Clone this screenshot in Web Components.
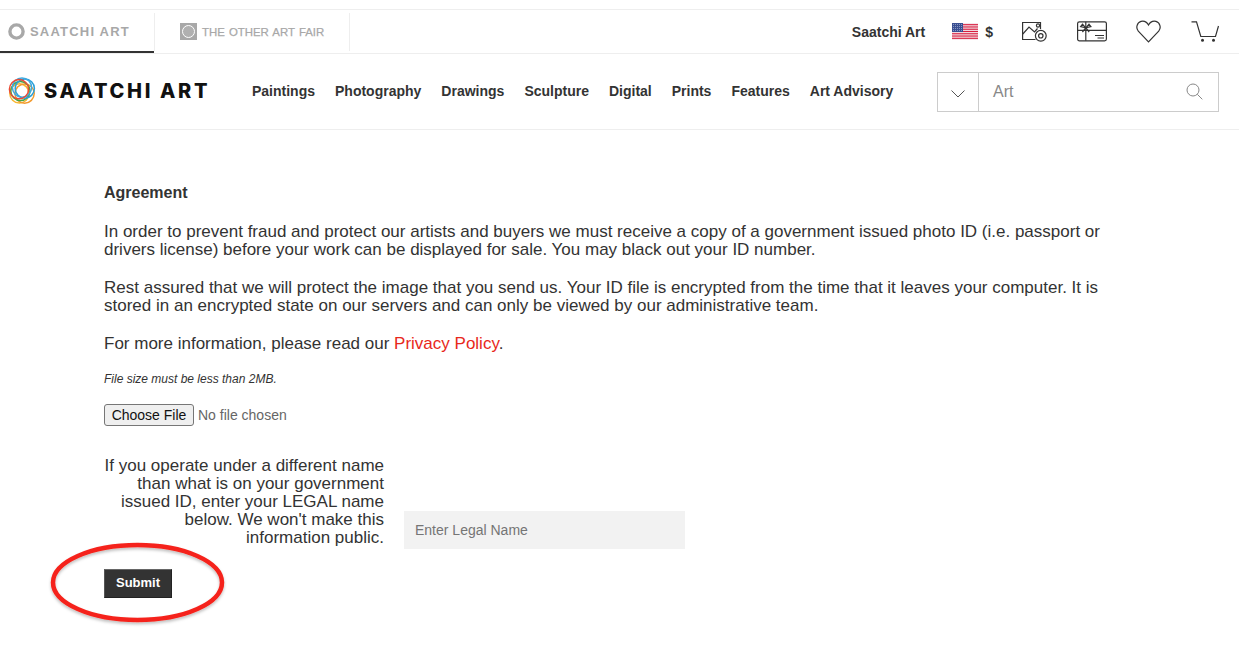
<!DOCTYPE html>
<html lang="en">
<head>
<meta charset="utf-8">
<title>Saatchi Art</title>
<style>
  html, body { margin: 0; background: #fff; }
  body { font-family: "Liberation Sans", Arial, sans-serif; color: #333; }
</style>
</head>
<body>
<site-topbar></site-topbar>
<site-mainbar></site-mainbar>
<agreement-form>
  <span slot="title">Agreement</span>
  <p>In order to prevent fraud and protect our artists and buyers we must receive a copy of a government issued photo ID (i.e. passport or drivers license) before your work can be displayed for sale. You may black out your ID number.</p>
  <p>Rest assured that we will protect the image that you send us. Your ID file is encrypted from the time that it leaves your computer. It is stored in an encrypted state on our servers and can only be viewed by our administrative team.</p>
  <p>For more information, please read our <a href="#" style="color:#e8281b;text-decoration:none">Privacy Policy</a>.</p>
</agreement-form>

<script>
// Top strip: site tabs on the left, account icons on the right
class SiteTopbar extends HTMLElement {
  constructor() {
    super();
    this.attachShadow({ mode: 'open' });
    const stripes = [1, 3, 5, 7, 9, 11, 13].map(i =>
      `<rect x="0" y="${(i * 17 / 15).toFixed(2)}" width="26" height="1.13" fill="#d81e3f"/>`).join('');
    this.shadowRoot.innerHTML = `
      <style>
        :host { display: block; margin-top: 9px; border-top: 1px solid #eee; border-bottom: 1px solid #eee; font-family: "Liberation Sans", Arial, sans-serif; }
        .bar { display: flex; align-items: stretch; height: 43px; }
        .tab { display: flex; align-items: center; box-sizing: border-box; color: #a8a8a8; font-weight: 700; white-space: nowrap; }
        .tab.one { width: 154px; padding: 2px 0 0 8px; gap: 5px; font-size: 13px; letter-spacing: 1.2px; border-bottom: 2px solid #333; }
        .tab.two { width: 194px; padding: 0 0 0 25px; gap: 5px; font-size: 11.4px; font-weight: 400; -webkit-text-stroke: .25px #a8a8a8; letter-spacing: 0; word-spacing: 1px; }
        .sep { width: 1px; background: #eee; margin: 3px 0 2px; }
        .right { margin-left: auto; display: flex; align-items: center; padding-right: 20px; }
        .name { font-size: 14px; font-weight: 700; color: #333; margin-right: 27px; }
        .cur { font-size: 14px; font-weight: 700; color: #333; margin: 0 29px 0 7px; }
        svg { display: block; flex: none; }
        .ic { fill: none; stroke: #333; stroke-width: 1.2; }
      </style>
      <div class="bar">
        <div class="tab one">
          <svg width="17" height="17" viewBox="0 0 17 17"><circle cx="8.5" cy="8.5" r="6.6" fill="none" stroke="#a8a8a8" stroke-width="3.4"/></svg>
          <span>SAATCHI ART</span>
        </div>
        <div class="sep"></div>
        <div class="tab two">
          <svg width="17" height="17" viewBox="0 0 17 17"><rect width="17" height="17" fill="#a8a8a8"/><circle cx="8.5" cy="8.5" r="6" fill="#b0b0b0" stroke="#fff" stroke-width="1"/></svg>
          <span>THE OTHER ART FAIR</span>
        </div>
        <div class="sep"></div>
        <div class="right">
          <span class="name">Saatchi Art</span>
          <svg width="26" height="17" viewBox="0 0 26 17"><rect width="26" height="17" fill="#f4e6ea"/>${stripes}<rect width="11" height="9" fill="#3a4f92"/><path d="M1 1.5H10M1 3.5H10M1 5.5H10M1 7.5H10" stroke="#aab4d6" stroke-width=".7" stroke-dasharray="1 1"/></svg>
          <span class="cur">$</span>
          <svg class="ic" width="25" height="21" viewBox="0 0 25 21" style="margin-right:30px">
            <path d="M18.5 8V1.5H.6V18.5H13.5"/><path d="M.8 13 7 6l5.5 5 3-3.5"/><circle cx="16" cy="4.5" r="1.6"/>
            <circle cx="18.8" cy="14.8" r="5.4"/><circle cx="18.8" cy="14.8" r="2.2"/>
          </svg>
          <svg class="ic" width="30" height="21" viewBox="0 0 30 21" style="margin-right:29px">
            <rect x=".6" y=".8" width="28.8" height="19" rx="1.8"/><path d="M.6 9.3H29.4M8.8 .8V19.8"/>
            <path d="M8.8 6.8 5.5 3.2 3.6 5.6ZM8.8 6.8 12 3.2 13.9 5.6ZM8.8 6.8 5.4 11M8.8 6.8 12.2 11"/><path d="M18 14.5H27M20.5 17H27"/>
          </svg>
          <svg class="ic" width="25" height="23" viewBox="0 0 25 23" style="margin-right:30px">
            <path d="M12.5 21.8 2.3 11.2C-.4 8 .8 2.6 5 1.4 8.2.6 11 2.4 12.5 5 14 2.4 16.8.6 20 1.4c4.2 1.2 5.4 6.6 2.7 9.8Z"/>
          </svg>
          <svg class="ic" width="28" height="21" viewBox="0 0 28 21">
            <path d="M.5 .8H5.5L9.8 15.5H24.5L27.5 5"/>
            <circle cx="11.5" cy="19.3" r="1.5" fill="#333" stroke="none"/><circle cx="22.5" cy="19.3" r="1.5" fill="#333" stroke="none"/>
          </svg>
        </div>
      </div>`;
  }
}

// Main bar: logo, category nav, search box
class SiteMainbar extends HTMLElement {
  constructor() {
    super();
    this.attachShadow({ mode: 'open' });
    const links = ['Paintings', 'Photography', 'Drawings', 'Sculpture', 'Digital', 'Prints', 'Features', 'Art Advisory'];
    // logo mark: coloured rings nudged around the centre, hole stays white
    const rings = [['#f7b733', -2.6, 2.4], ['#f39a2e', 2.6, 2.6], ['#46a546', -1.6, 0], ['#2a9fd8', 2.8, -2.4], ['#3fa9e0', 0, -3.4], ['#ea4b35', -3, -1.8]]
      .map(([c, dx, dy]) => `<circle cx="${14 + dx}" cy="${14 + dy}" r="9.6" stroke="${c}"/>`).join('');
    this.shadowRoot.innerHTML = `
      <style>
        :host { display: block; border-bottom: 1px solid #eee; font-family: "Liberation Sans", Arial, sans-serif; }
        .bar { display: flex; align-items: center; height: 75px; box-sizing: border-box; padding: 0 20px 2px 8px; }
        .logo { display: flex; align-items: center; gap: 8px; width: 244px; flex: none; }
        .logo svg { flex: none; }
        .word { font-family: Inter, sans-serif; font-weight: 800; font-size: 20px; letter-spacing: 2.65px; color: #111; white-space: nowrap; }
        nav { display: flex; gap: 20px; font-size: 14px; font-weight: 700; color: #333; white-space: nowrap; }
        .search { margin-left: auto; display: flex; width: 282px; height: 40px; box-sizing: border-box; border: 1px solid #ccc; position: relative; top: 1px; }
        .drop { width: 41px; display: flex; align-items: center; justify-content: center; border-right: 1px solid #ccc; flex: none; padding-top: 4px; box-sizing: border-box; }
        .field { flex: 1; display: flex; align-items: center; justify-content: space-between; padding: 0 15px 0 14px; font-size: 16px; color: #888; }
      </style>
      <div class="bar">
        <div class="logo">
          <svg width="28" height="28" viewBox="0 0 28 28" fill="none" stroke-width="1.5">${rings}</svg>
          <span class="word">SAATCHI ART</span>
        </div>
        <nav>${links.map(l => `<span>${l}</span>`).join('')}</nav>
        <div class="search">
          <div class="drop"><svg width="14" height="8" viewBox="0 0 14 8" fill="none" stroke="#555"><path d="M.5 .5 7 7 13.5 .5"/></svg></div>
          <div class="field"><span>Art</span>
            <svg width="17" height="17" viewBox="0 0 17 17" fill="none" stroke="#888" stroke-width="1"><circle cx="7" cy="7" r="6"/><path d="M11.3 11.3 16.3 16.3"/></svg>
          </div>
        </div>
      </div>`;
  }
}

// Agreement copy, upload row, legal name row and submit button
class AgreementForm extends HTMLElement {
  constructor() {
    super();
    this.attachShadow({ mode: 'open' });
    this.shadowRoot.innerHTML = `
      <style>
        :host { display: block; position: relative; box-sizing: border-box; padding: 54px 0 50px 104px; width: 1104px; font-size: 17px; line-height: 18px; color: #333; font-family: "Liberation Sans", Arial, sans-serif; }
        .title { font-size: 16px; font-weight: 700; margin-bottom: 21px; }
        ::slotted(p) { margin: 0 0 20px; }
        .note { font-size: 12px; font-style: italic; line-height: 14px; margin: -1px 0 18px; }
        .file { display: flex; align-items: center; gap: 4px; height: 22px; font-size: 14px; color: #666; margin-bottom: 31px; }
        button.choose { font: 14px "Liberation Sans", Arial, sans-serif; color: #111; background: #efefef; border: 1px solid #767676; border-radius: 3px; height: 22px; width: 90px; padding: 0; }
        .legal { display: flex; align-items: flex-end; gap: 20px; }
        .legal .text { width: 280px; text-align: right; }
        .legal input { width: 281px; height: 38px; box-sizing: border-box; border: 0; background: #f2f2f2; padding: 0 11px; font: 14px "Liberation Sans", Arial, sans-serif; margin-bottom: -2px; }
        .legal input::placeholder { color: #757575; opacity: 1; }
        .submit { display: block; margin-top: 22px; width: 68px; height: 29px; box-sizing: border-box; padding: 0 0 2px; background: #333; color: #fff; font: 700 13px "Liberation Sans", Arial, sans-serif; border: 1px solid; border-color: #666 #222 #222 #555; }
        .ring { position: absolute; left: 47px; top: 412px; pointer-events: none; }
      </style>
      <div class="title"><slot name="title"></slot></div>
      <slot></slot>
      <div class="note">File size must be less than 2MB.</div>
      <div class="file"><button class="choose" type="button">Choose File</button><span>No file chosen</span></div>
      <div class="legal">
        <div class="text">If you operate under a different name than what is on your government issued ID, enter your LEGAL name below. We won't make this information public.</div>
        <input type="text" placeholder="Enter Legal Name">
      </div>
      <button class="submit" type="button">Submit</button>
      <svg class="ring" width="184" height="90" viewBox="0 0 184 90">
        <defs><filter id="sh" x="-10%" y="-20%" width="120%" height="140%"><feDropShadow dx="0" dy="2" stdDeviation="1.5" flood-color="#000" flood-opacity=".25"/></filter></defs>
        <ellipse cx="90.5" cy="40.5" rx="84.5" ry="37.5" fill="none" stroke="#f5231a" stroke-width="4.5" filter="url(#sh)"/>
      </svg>`;
  }
}

customElements.define('site-topbar', SiteTopbar);
customElements.define('site-mainbar', SiteMainbar);
customElements.define('agreement-form', AgreementForm);
</script>
</body>
</html>
